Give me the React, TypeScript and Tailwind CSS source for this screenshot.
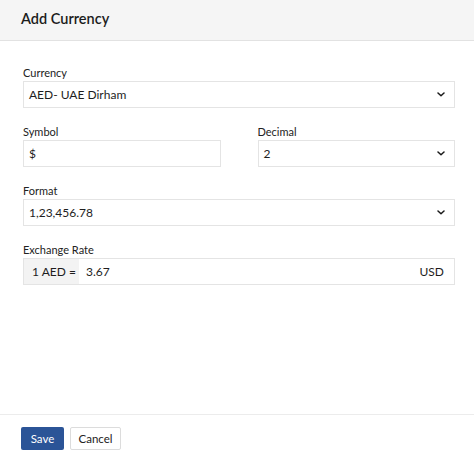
import React from "react";

const Chevron = () => (
  <svg width="8" height="5" viewBox="0 0 8 5" className="shrink-0">
    <path d="M1 1 L4 3.8 L7 1" fill="none" stroke="#1a1a1a" strokeWidth="1.5" strokeLinecap="round" strokeLinejoin="round" />
  </svg>
);

const Label = ({ children }: { children: React.ReactNode }) => (
  <div className="text-[11px] leading-[17px] text-[#222]">{children}</div>
);

const Select = ({ value }: { value: string }) => (
  <div className="h-[27px] border border-[#e4e4e4] bg-white flex items-center justify-between pl-[5px] pr-[9px] text-[12px] text-[#1e1e1e]">
    <span>{value}</span>
    <Chevron />
  </div>
);

export default function App() {
  return (
    <div
      className="w-[474px] h-[456px] bg-white flex flex-col"
      style={{ fontFamily: "Lato, 'Open Sans', sans-serif" }}
    >
      <div className="h-[41px] shrink-0 bg-[#f5f5f5] border-b border-[#e2e2e2] flex items-center px-[21px] pb-[2px]">
        <span className="text-[14.5px] font-semibold text-[#1c1c1c]">Add Currency</span>
      </div>
      <div className="flex-1 pl-[23px] pr-[19px] pt-[23px] flex flex-col gap-[15px]">
        <div>
          <Label>Currency</Label>
          <Select value="AED- UAE Dirham" />
        </div>
        <div className="grid grid-cols-2 gap-x-[37px]">
          <div>
            <Label>Symbol</Label>
            <div className="h-[27px] border border-[#e4e4e4] bg-white flex items-center pl-[5px] text-[12px] text-[#1e1e1e]">$</div>
          </div>
          <div>
            <Label>Decimal</Label>
            <Select value="2" />
          </div>
        </div>
        <div>
          <Label>Format</Label>
          <Select value="1,23,456.78" />
        </div>
        <div>
          <Label>Exchange Rate</Label>
          <div className="h-[27px] border border-[#e4e4e4] bg-white flex items-stretch text-[12px] text-[#1e1e1e]">
            <div className="w-[55px] bg-[#f3f3f3] flex items-center pl-[8px]">1 AED =</div>
            <div className="flex-1 flex items-center justify-between pl-[7px] pr-[10px]">
              <span>3.67</span>
              <span>USD</span>
            </div>
          </div>
        </div>
      </div>
      <div className="h-[42px] shrink-0 border-t border-[#ececec] flex items-start gap-[6px] px-[21px] pt-[12px]">
        <button className="h-[23px] w-[43px] bg-[#2b5497] text-white text-[11.5px] rounded-[2px]">Save</button>
        <button className="h-[23px] w-[51px] bg-white border border-[#dcdcdc] text-[#222] text-[11.5px] rounded-[2px]">Cancel</button>
      </div>
    </div>
  );
}
